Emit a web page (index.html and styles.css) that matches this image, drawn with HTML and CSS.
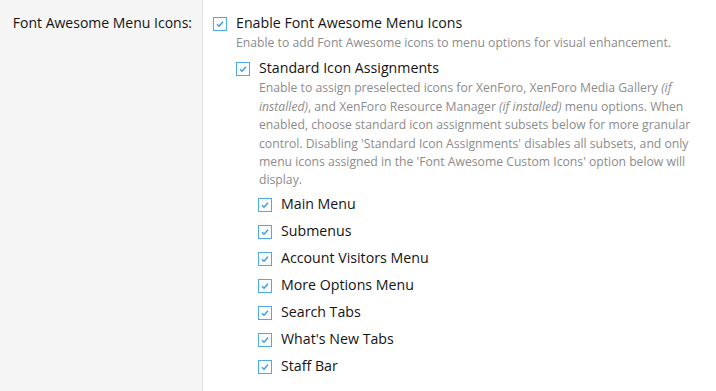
FILE: index.html
```html
<!DOCTYPE html>
<html>
  <head>
    <title>Options</title>
    <meta charset="UTF-8" />
    <link rel="stylesheet" href="styles.css">
  </head>

  <body>
    <div class="form_row">
      <div class="row_label">Font Awesome Menu Icons:</div>
      <div class="row_input">
        <div class="choice">
          <span class="check_box">
            <svg width="12" height="12" viewBox="0 0 12 12"><path d="M3 6.2 L5 8.2 L9 3.8" fill="none" stroke="#3d9ae0" stroke-width="1.4" /></svg>
          </span>
          <div class="choice_body">
            <div class="choice_label">Enable Font Awesome Menu Icons</div>
            <div class="choice_hint">Enable to add Font Awesome icons to menu options for visual enhancement.</div>

            <div class="choice sub">
              <span class="check_box">
                <svg width="12" height="12" viewBox="0 0 12 12"><path d="M3 6.2 L5 8.2 L9 3.8" fill="none" stroke="#3d9ae0" stroke-width="1.4" /></svg>
              </span>
              <div class="choice_body">
                <div class="choice_label">Standard Icon Assignments</div>
                <div class="choice_hint">
                  Enable to assign preselected icons for XenForo, XenForo Media Gallery <i>(if installed)</i>, and XenForo Resource Manager <i>(if installed)</i> menu options. When enabled, choose standard icon assignment subsets below for more granular control. Disabling 'Standard Icon Assignments' disables all subsets, and only menu icons assigned in the 'Font Awesome Custom Icons' option below will display.
                </div>

                <div class="sub_list">
                  <div class="choice item">
                    <span class="check_box"><svg width="12" height="12" viewBox="0 0 12 12"><path d="M3 6.2 L5 8.2 L9 3.8" fill="none" stroke="#3d9ae0" stroke-width="1.4" /></svg></span>
                    <div class="choice_label">Main Menu</div>
                  </div>
                  <div class="choice item">
                    <span class="check_box"><svg width="12" height="12" viewBox="0 0 12 12"><path d="M3 6.2 L5 8.2 L9 3.8" fill="none" stroke="#3d9ae0" stroke-width="1.4" /></svg></span>
                    <div class="choice_label">Submenus</div>
                  </div>
                  <div class="choice item">
                    <span class="check_box"><svg width="12" height="12" viewBox="0 0 12 12"><path d="M3 6.2 L5 8.2 L9 3.8" fill="none" stroke="#3d9ae0" stroke-width="1.4" /></svg></span>
                    <div class="choice_label">Account Visitors Menu</div>
                  </div>
                  <div class="choice item">
                    <span class="check_box"><svg width="12" height="12" viewBox="0 0 12 12"><path d="M3 6.2 L5 8.2 L9 3.8" fill="none" stroke="#3d9ae0" stroke-width="1.4" /></svg></span>
                    <div class="choice_label">More Options Menu</div>
                  </div>
                  <div class="choice item">
                    <span class="check_box"><svg width="12" height="12" viewBox="0 0 12 12"><path d="M3 6.2 L5 8.2 L9 3.8" fill="none" stroke="#3d9ae0" stroke-width="1.4" /></svg></span>
                    <div class="choice_label">Search Tabs</div>
                  </div>
                  <div class="choice item">
                    <span class="check_box"><svg width="12" height="12" viewBox="0 0 12 12"><path d="M3 6.2 L5 8.2 L9 3.8" fill="none" stroke="#3d9ae0" stroke-width="1.4" /></svg></span>
                    <div class="choice_label">What's New Tabs</div>
                  </div>
                  <div class="choice item">
                    <span class="check_box"><svg width="12" height="12" viewBox="0 0 12 12"><path d="M3 6.2 L5 8.2 L9 3.8" fill="none" stroke="#3d9ae0" stroke-width="1.4" /></svg></span>
                    <div class="choice_label">Staff Bar</div>
                  </div>
                </div>
              </div>
            </div>
          </div>
        </div>
      </div>
    </div>
  </body>
</html>
```

FILE: styles.css
```css
body {
  margin: 0;
  background: #fff;
  font-family: "Open Sans", sans-serif;
  color: #141414;
}

.form_row {
  display: grid;
  grid-template-columns: 203px 1fr;
  min-height: 391px;
}

.row_label {
  background: #f5f5f5;
  border-right: 1px solid #dfdfdf;
  text-align: right;
  padding: 12px 10px 0 0;
  font-size: 14px;
  line-height: 22px;
  color: #141414;
}

.row_input {
  padding: 12px 4px 0 10px;
}

.choice {
  display: flex;
  gap: 9px;
}

.check_box {
  flex: none;
  width: 12px;
  height: 12px;
  border: 1px solid #4fa9e8;
  background: #fafdff;
  margin-top: 5px;
  display: flex;
}

.choice_label {
  font-size: 14.2px;
  line-height: 22px;
}

.choice_hint {
  font-size: 12.2px;
  line-height: 18.4px;
  color: #8c8c8c;
}

.sub {
  margin-top: 5px;
}

.sub_list {
  margin-top: 3px;
  display: flex;
  flex-direction: column;
  gap: 5px;
}

.item {
  margin-left: -1px;
}
```
